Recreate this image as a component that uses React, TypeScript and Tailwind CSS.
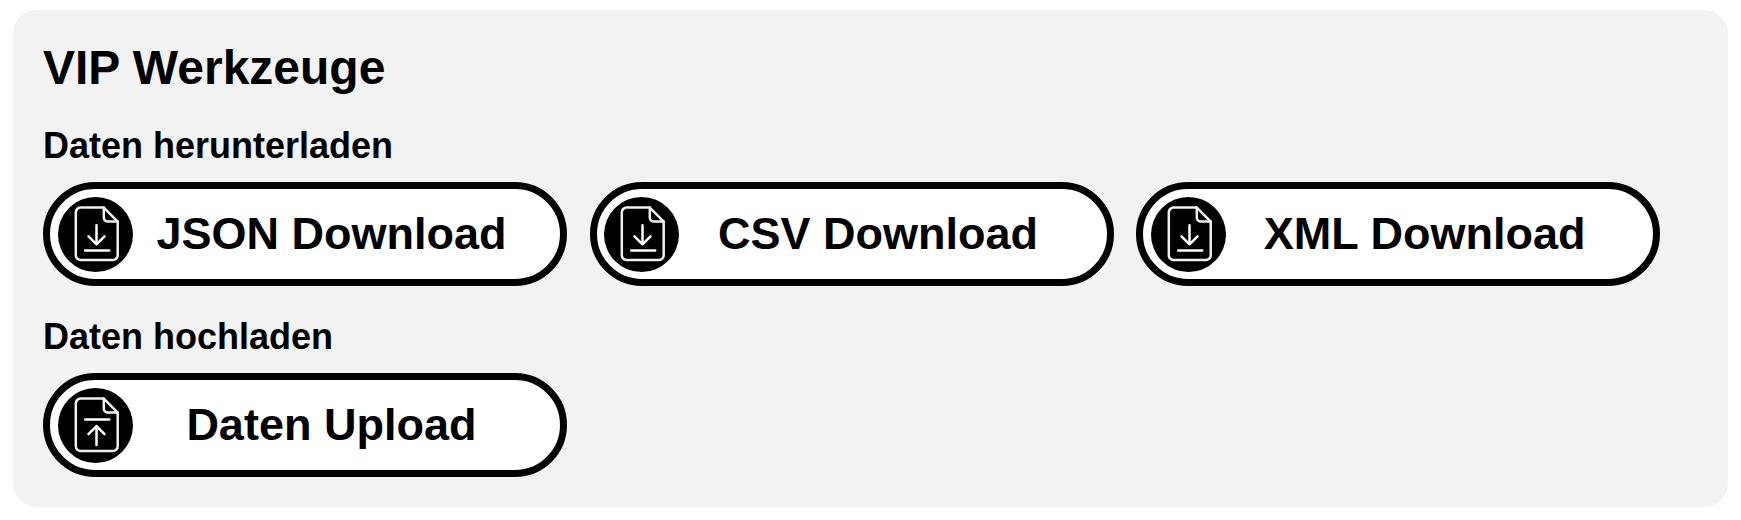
type IconKind = "download" | "upload";

function FileIcon({ kind }: { kind: IconKind }) {
  return (
    <svg
      className="size-[75px] shrink-0"
      viewBox="0 0 75 75"
      fill="none"
      stroke="#fff"
      strokeWidth="2.5"
      strokeLinecap="round"
      strokeLinejoin="round"
      aria-hidden="true"
    >
      <circle cx="37.5" cy="37.5" r="37.5" fill="#000" stroke="none" />
      <g stroke="#f0f0f0">
        <path d="M45.8 10.6H22.6a4.8 4.8 0 0 0-4.8 4.8v42.8a4.8 4.8 0 0 0 4.8 4.8h32.3a4.8 4.8 0 0 0 4.8-4.8V24.6z" />
        <path d="M45.8 10.6v10a4 4 0 0 0 4 4h9.9" />
      </g>
      {kind === "download" ? (
        <path d="M38.5 28.3v19M30.5 39.4l8 8 8-8M27.2 53.5h24" />
      ) : (
        <path d="M38.5 57V38.2M30.5 46.1l8-8 8 8M27.2 31.4h24" />
      )}
    </svg>
  );
}

function ToolButton({ label, kind }: { label: string; kind: IconKind }) {
  return (
    <button
      type="button"
      className="flex h-[104px] w-[524px] shrink-0 items-center rounded-full border-[7px] border-black bg-white pl-[7.8px] pr-[30px]"
    >
      <FileIcon kind={kind} />
      <span className="flex-1 whitespace-nowrap text-center text-[45px] leading-[50px] font-bold">
        {label}
      </span>
    </button>
  );
}

export default function App() {
  return (
    <div className="min-h-[520px] bg-white px-[13px] pt-[10px] font-['Liberation_Sans',Arial,sans-serif] text-black">
      <section className="flex h-[497px] flex-col items-start rounded-[24px] bg-[#f2f2f2] px-[30px] pt-[31px]">
        <h2 className="text-[48px] leading-[54px] font-bold">VIP Werkzeuge</h2>
        <h3 className="mt-[31px] text-[36px] leading-[40px] font-bold">Daten herunterladen</h3>
        <div className="mt-[16px] flex gap-[22.6px]">
          <ToolButton label="JSON Download" kind="download" />
          <ToolButton label="CSV Download" kind="download" />
          <ToolButton label="XML Download" kind="download" />
        </div>
        <h3 className="mt-[31px] text-[36px] leading-[40px] font-bold">Daten hochladen</h3>
        <div className="mt-[16px] flex">
          <ToolButton label="Daten Upload" kind="upload" />
        </div>
      </section>
    </div>
  );
}
